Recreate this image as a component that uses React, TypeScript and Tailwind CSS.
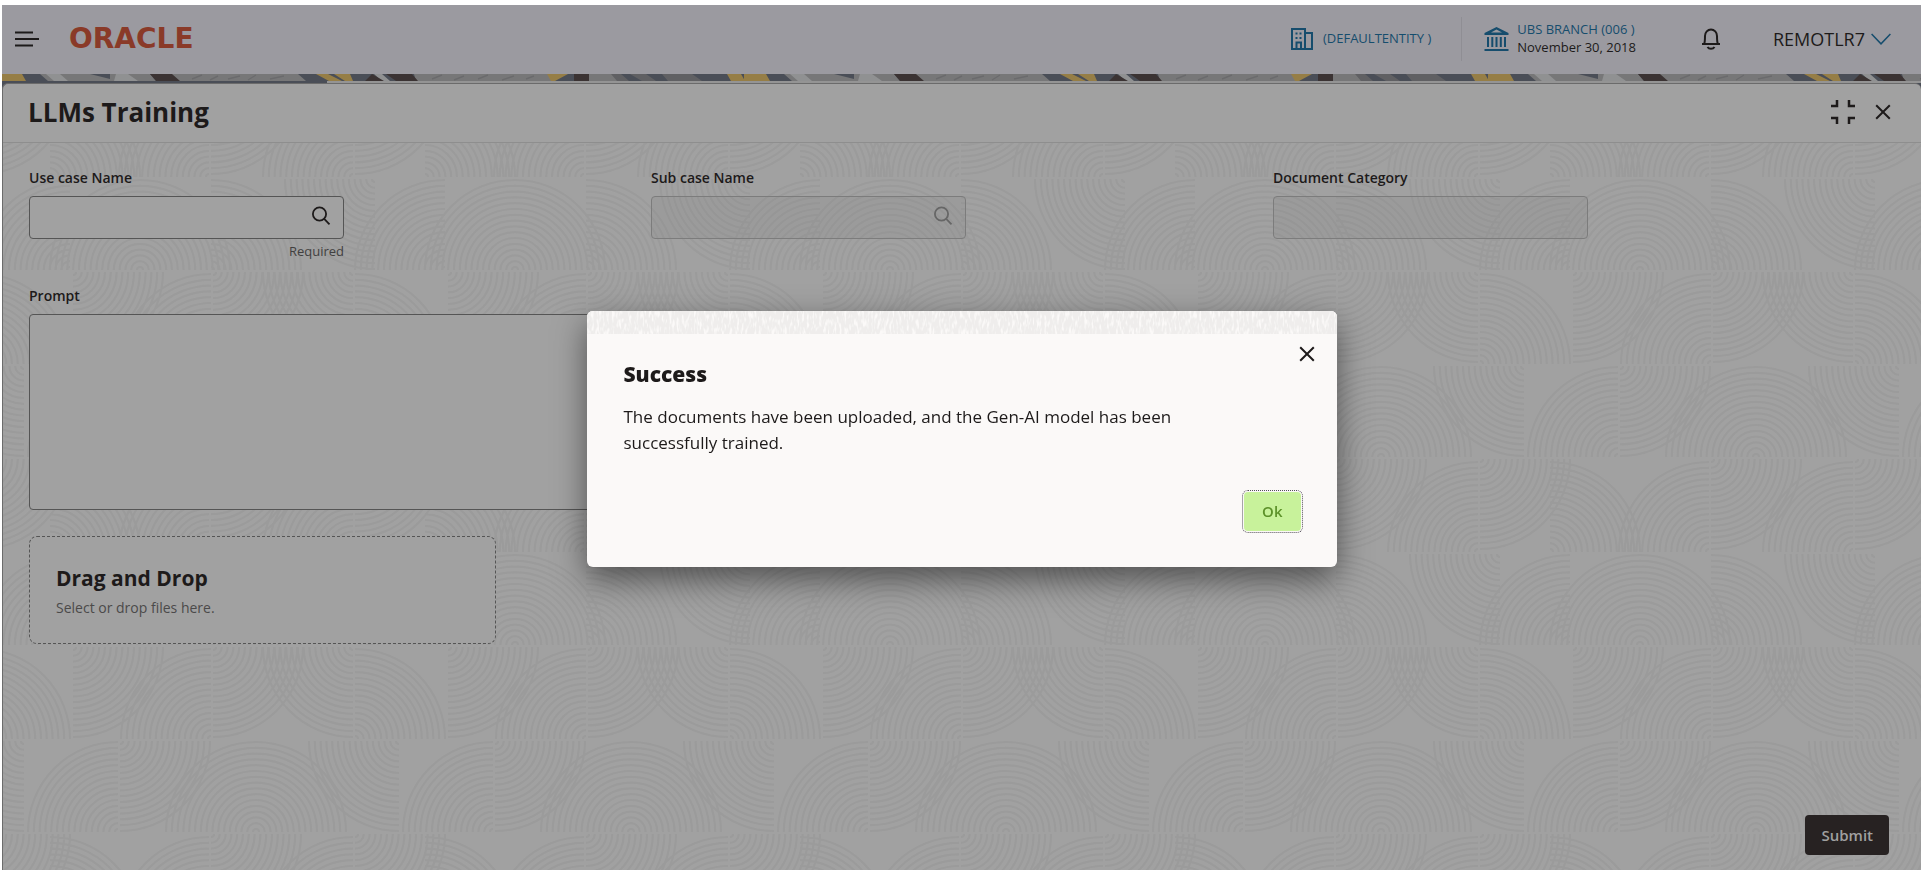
import { useState } from 'react'

type Quadrant = 'ul' | 'ur' | 'bl' | 'br'

// quarter-circle fans of the panel background, one 375x375 tile
const fans: { x: number; y: number; q: Quadrant }[] = [
  { x: 356, y: 92, q: 'ul' },
  { x: 356, y: 92, q: 'ur' },
  { x: 124, y: 1, q: 'bl' },
  { x: 218, y: 92, q: 'ul' },
  { x: 220, y: 1, q: 'br' },
  { x: 78, y: 187, q: 'ul' },
  { x: 80, y: 94, q: 'br' },
  { x: 150, y: 187, q: 'ur' },
  { x: 309, y: 187, q: 'ul' },
  { x: 311, y: 94, q: 'br' },
  { x: 100, y: 189, q: 'bl' },
  { x: 170, y: 280, q: 'ul' },
  { x: 240, y: 280, q: 'ul' },
  { x: 240, y: 280, q: 'ur' },
  { x: 311, y: 280, q: 'ur' },
  { x: 78, y: 282, q: 'bl' },
  { x: 80, y: 374, q: 'ur' },
  { x: 173, y: 282, q: 'br' },
  { x: 311, y: 374, q: 'ul' },
  { x: 313, y: 282, q: 'br' },
]

const rings = Array.from({ length: 16 }, (_, i) => 3 + i * 5.8)

function arc(x: number, y: number, r: number, q: Quadrant) {
  const sx = q === 'ul' || q === 'bl' ? -1 : 1
  const sy = q === 'ul' || q === 'ur' ? -1 : 1
  const sweep = sx * sy > 0 ? 1 : 0
  return `M${x + sx * r} ${y}A${r} ${r} 0 0 ${sweep} ${x} ${y + sy * r}`
}

// repeated one tile to each side so that fans crossing the edge stay whole
const fanPath = fans
  .flatMap((f) => [-375, 0, 375].flatMap((dx) => rings.map((r) => arc(f.x + dx, f.y, r, f.q))))
  .join('')

function PanelPattern() {
  return (
    <svg className="absolute inset-0 h-full w-full" aria-hidden="true">
      <defs>
        <pattern id="fans" width="375" height="375" patternUnits="userSpaceOnUse" patternTransform="translate(272 222)">
          <path d={fanPath} fill="none" stroke="#9b9b9b" strokeWidth="2.2" />
        </pattern>
      </defs>
      <rect width="100%" height="100%" fill="url(#fans)" />
    </svg>
  )
}

function BannerStrip() {
  return (
    <svg className="block h-[7px] w-full" aria-hidden="true">
      <defs>
        <pattern id="strip" width="744" height="7" patternUnits="userSpaceOnUse">
          <rect width="744" height="7" fill="#4a4e57" />
          <path d="M0 0h20l4 7H0z M314 0h12l14 7h-13z M332 0h16l3 7h-8z M544 0h22l-13 7h-6z M725 0h14l4 7h-14z M742 0h2v7h-2z" fill="#967e46" />
          <path d="M38 0h110l6 7H46z M168 0h128l8 7H176z M412 0h133l4 7H414z M587 0h28l6 7h-34z" fill="#777778" />
          <path d="M44 0h14l8 7H52z M114 0h12l10 7h-24z M372 0h8l8 7h-8z" fill="#909192" />
          <path d="M88 0h20v5z" fill="#4a4e57" />
          <path d="M148 0h22l8 7h-24z M370 0l12 7h-19z M384 0h26l6 7h-22z M572 0h15v7h-15z" fill="#3b3333" />
          <path d="M609 0h10l8 7h-12z M628 0h16l10 7h-14z M660 0h30l10 7h-34z" fill="#606063" />
          <path
            d="M190 5l10-4M208 6l8-4M226 5l12-3M246 6l8-5M268 5l14-3M430 5l10-4M452 6l10-4M476 5l10-4M500 6l12-4M524 5l8-3"
            stroke="#6a6a6c"
            strokeWidth="1.4"
          />
        </pattern>
      </defs>
      <rect width="100%" height="100%" fill="url(#strip)" />
    </svg>
  )
}

function BuildingIcon() {
  return (
    <svg width="22" height="22" viewBox="0 0 22 22" fill="none" stroke="#164d6d" strokeWidth="2" aria-hidden="true">
      <path d="M1 1h13v20H1z M14 5h7v16h-7" />
      <path d="M5.5 21v-6.500h4.500V21" />
      <path d="M4.500 5.500h2M8.500 5.500h2M4.500 10h2M8.500 10h2" />
    </svg>
  )
}

function BankIcon() {
  return (
    <svg width="25" height="24" viewBox="0 0 25 24" fill="#164d6d" aria-hidden="true">
      <path fillRule="evenodd" d="M12.500 0L24.500 6v2H.5V6zM12.500 2.600L7 5.500h11z" />
      <path d="M3 10h2v10H3zM7.300 10h2v10h-2zM11.500 10h2v10h-2zM15.800 10h2v10h-2zM20 10h2v10h-2zM.5 22h24v2H.5z" />
    </svg>
  )
}

function BellIcon() {
  return (
    <svg width="20" height="22" viewBox="0 0 20 22" fill="none" stroke="#1d1a1a" strokeWidth="2" aria-hidden="true">
      <path d="M1 16h18M3 16c1-1.500 1-3 1-8a6 6.500 0 0 1 12 0c0 5 0 6.500 1 8" />
      <path d="M6.500 19c1.500 2.400 5.500 2.400 7 0" />
    </svg>
  )
}

function CloseIcon() {
  return (
    <svg width="16" height="16" viewBox="0 0 16 16" stroke="#1d1a1a" strokeWidth="2" aria-hidden="true">
      <path d="M1.200 1.200l13.600 13.600M14.800 1.200L1.200 14.800" />
    </svg>
  )
}

function SearchIcon() {
  return (
    <svg width="20" height="20" viewBox="0 0 20 20" fill="none" stroke="currentColor" strokeWidth="1.800" aria-hidden="true">
      <circle cx="8.500" cy="8" r="6.600" />
      <path d="M13.200 12.800l5.300 5.500" />
    </svg>
  )
}

function Header() {
  return (
    <header className="flex h-[69px] items-center bg-[#9b9aa0] pr-[30px] pb-0.5 pl-[13px]">
      <button type="button" aria-label="Menu">
        <svg width="24" height="16" viewBox="0 0 24 16" stroke="#1d1a1a" strokeWidth="2" aria-hidden="true">
          <path d="M0 1.500h18M0 8h24M0 14.500h18" />
        </svg>
      </button>
      <a href="#" className="ml-[30px] font-['DejaVu_Sans',sans-serif] text-[28px] leading-8 font-bold text-[#8a3a28]">
        ORACLE
      </a>
      <div className="ml-auto flex items-center">
        <BuildingIcon />
        <a href="#" className="ml-2.5 text-[13px] text-[#164d6d]">
          (DEFAULTENTITY )
        </a>
        <div className="mr-[22px] ml-[30px] h-11 w-px bg-[#8f8e94]" />
        <BankIcon />
        <div className="ml-2 pb-0.5 text-[13px] leading-[18px]">
          <a href="#" className="block text-[#164d6d]">
            UBS BRANCH (006 )
          </a>
          <div>November 30, 2018</div>
        </div>
        <button type="button" aria-label="Notifications" className="ml-[65px]">
          <BellIcon />
        </button>
        <button type="button" className="ml-[52px] flex items-center gap-1.5 text-lg">
          REMOTLR7
          <svg width="20" height="12" viewBox="0 0 20 12" fill="none" stroke="#164d6d" strokeWidth="1.500" aria-hidden="true">
            <path d="M.6 1L10 10.800 19.400 1" />
          </svg>
        </button>
      </div>
    </header>
  )
}

export default function App() {
  const [open, setOpen] = useState(true)

  return (
    <div className="flex min-h-screen flex-col bg-white pt-[5px] pr-0.5 pb-2 pl-0.5 font-['Open_Sans',sans-serif] text-[#1d1a1a]">
      <Header />
      <div className="flex flex-1 flex-col bg-[#4a4e57]">
        <BannerStrip />
        <div className="ml-[325px] h-0.5 bg-[#949494]" />
        <main className="flex flex-1 flex-col rounded-t-md border-t border-l border-[#6b6b6b] bg-[#a1a1a1]">
          <div className="flex h-[59px] items-center border-b border-[#8e8e8e] pr-[30px] pb-0.5 pl-[25px]">
            <h1 className="text-[26px] font-bold">LLMs Training</h1>
            <button type="button" aria-label="Collapse" className="ml-auto">
              <svg width="24" height="24" viewBox="0 0 24 24" fill="none" stroke="#1d1a1a" strokeWidth="2.500" aria-hidden="true">
                <path d="M0 6h6V0M18 0v6h6M0 18h6v6M18 24v-6h6" />
              </svg>
            </button>
            <button type="button" aria-label="Close" className="ml-5">
              <CloseIcon />
            </button>
          </div>

          <div className="relative flex flex-1 flex-col">
            <PanelPattern />
            <div className="relative flex flex-1 flex-col pt-[23px] pr-8 pb-[15px] pl-[26px]">
              <div className="-mr-[6px] grid grid-cols-3">
                <div className="w-[315px]">
                  <label htmlFor="use-case" className="block text-sm leading-6 font-semibold">
                    Use case Name
                  </label>
                  <div className="mt-[6px] flex h-[43px] items-center rounded border border-[#555] bg-[#a1a1a1] pr-3">
                    <input id="use-case" className="h-full min-w-0 flex-1 px-3 outline-none" />
                    <button type="button" aria-label="Search use case" className="pb-1">
                      <SearchIcon />
                    </button>
                  </div>
                  <div className="mt-[3px] text-right text-[13px] leading-[18px] text-[#414040]">Required</div>
                </div>
                <div className="w-[315px]">
                  <label htmlFor="sub-case" className="block text-sm leading-6 font-semibold">
                    Sub case Name
                  </label>
                  <div className="mt-[6px] flex h-[43px] items-center rounded border border-[#7c7c7c] bg-black/3 pr-3 text-[#666]">
                    <input id="sub-case" disabled className="h-full min-w-0 flex-1 px-3 outline-none" />
                    <button type="button" disabled aria-label="Search sub case" className="pb-1">
                      <SearchIcon />
                    </button>
                  </div>
                </div>
                <div className="w-[315px]">
                  <label htmlFor="category" className="block text-sm leading-6 font-semibold">
                    Document Category
                  </label>
                  <input
                    id="category"
                    disabled
                    className="mt-[6px] block h-[43px] w-full rounded border border-[#7c7c7c] bg-black/3 px-3"
                  />
                </div>
              </div>

              <div className="mt-6 w-1/2">
                <label htmlFor="prompt" className="block text-sm leading-6 font-semibold">
                  Prompt
                </label>
                <textarea
                  id="prompt"
                  className="mt-[6px] block h-[196px] w-full resize-none rounded border border-[#555] bg-[#a1a1a1] p-3 outline-none"
                />
              </div>

              <button
                type="button"
                className="mt-[26px] w-[467px] rounded-lg border border-dashed border-[#555] bg-[#a1a1a1] px-[26px] pt-[25px] pb-[23px] text-left"
              >
                <span className="block text-[21px] leading-8 font-bold">Drag and Drop</span>
                <span className="mt-0.5 block text-sm leading-6 text-[#4b4a4a]">Select or drop files here.</span>
              </button>

              <button
                type="button"
                className="mt-auto h-10 self-end rounded bg-[#272222] px-4 text-[15px] font-semibold text-[#a0a0a0]"
              >
                Submit
              </button>
            </div>
          </div>
        </main>
      </div>

      {open && (
        <div className="fixed inset-0 flex items-center justify-center">
          <div
            role="dialog"
            aria-modal="true"
            aria-labelledby="dialog-title"
            className="w-[750px] overflow-hidden rounded-md bg-[#fbf9f8] shadow-[0_12px_32px_rgba(0,0,0,0.5)]"
          >
            <svg className="block h-[23px] w-full bg-[#fbf9f8]" aria-hidden="true">
              <filter id="weave" x="0" y="0" width="100%" height="100%">
                <feTurbulence type="fractalNoise" baseFrequency="0.4 0.12" numOctaves="2" seed="4" />
                <feColorMatrix values="0 0 0 0 0.86  0 0 0 0 0.85  0 0 0 0 0.84  4 0 0 0 -1.100" />
              </filter>
              <rect width="100%" height="100%" filter="url(#weave)" />
            </svg>
            <div className="relative pt-6 pr-[34px] pb-[34px] pl-[37px]">
              <button
                type="button"
                aria-label="Close dialog"
                className="absolute top-3 right-[22px]"
                onClick={() => setOpen(false)}
              >
                <CloseIcon />
              </button>
              <h2 id="dialog-title" className="text-[21px] leading-8 font-extrabold">
                Success
              </h2>
              <p className="mt-[14px] max-w-[580px] text-[17px] leading-[26px]">
                The documents have been uploaded, and the Gen-AI model has been successfully trained.
              </p>
              <div className="mt-[34px] flex justify-end">
                <button
                  type="button"
                  className="rounded-md border border-dotted border-[#55505a] p-px"
                  onClick={() => setOpen(false)}
                >
                  <span className="flex h-[39px] items-center rounded bg-[#c8f29b] px-[18px] text-[15px] font-semibold text-[#5c9129]">
                    Ok
                  </span>
                </button>
              </div>
            </div>
          </div>
        </div>
      )}
    </div>
  )
}
